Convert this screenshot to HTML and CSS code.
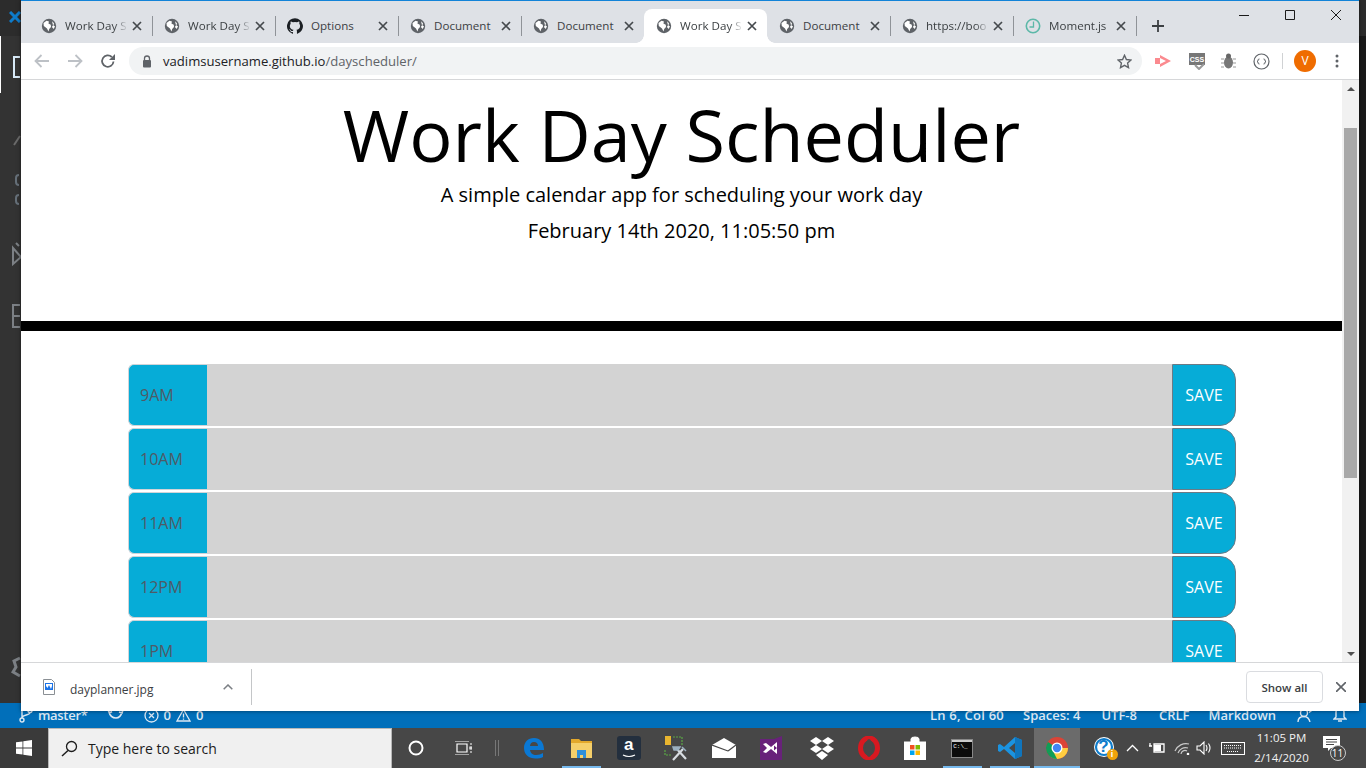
FILE: index.html
```html
<!DOCTYPE html>
<html lang="en">
<head>
<meta charset="utf-8">
<title>Work Day Scheduler</title>
<link rel="stylesheet" href="styles.css">
</head>
<body>
<svg class="defs" width="0" height="0" aria-hidden="true">
  <symbol id="globe" viewBox="0 0 16 16">
    <circle cx="8" cy="8" r="7.200" fill="#5f6368"/>
    <path d="M2.500 5 5.500 2.800l2.500.7-.6 2 2.400 1.300.2 2.200L8.200 11 7.500 13.500 6 10.500 2.800 8z" fill="#fff"/>
    <path d="M11 3.200l2 2-.6 2.300 1.600.7-1.300 2.800-1.800-2L12 7.200z" fill="#fff"/>
  </symbol>
  <symbol id="close" viewBox="0 0 10 10">
    <path d="M1 1l8 8M9 1L1 9" stroke="#45494d" stroke-width="1.700" fill="none"/>
  </symbol>
</svg>

<div class="desktop">
  <div class="vscode">
    <div class="vs-top">
      <svg class="vs-x" width="12" height="12" viewBox="0 0 12 12"><path d="M1 1l10 10M11 1L1 11" stroke="#0e7ccb" stroke-width="3"/></svg>
    </div>
    <div class="vs-middle">
      <div class="activity">
        <div class="activity-mark"></div>
        <svg class="files-icon" width="8" height="22" viewBox="0 0 8 22"><path d="M7 1H1v20h6" fill="none" stroke="#d7e9f7" stroke-width="2"/></svg>
        <svg class="act-icon search-act" width="8" height="12" viewBox="0 0 8 12"><path d="M1 11l6-9" stroke="#6b6b6b" stroke-width="2"/></svg>
        <svg class="act-icon git-act" width="8" height="32" viewBox="0 0 8 32"><path d="M6 2a3 3 0 0 0-3 3v4a3 3 0 0 0 3 3M6 22a3 3 0 0 0-3 3v3a3 3 0 0 0 3 3" fill="none" stroke="#667079" stroke-width="2"/></svg>
        <svg class="act-icon debug-act" width="10" height="24" viewBox="0 0 10 24"><path d="M2 6v16l8-7L2 6zM5 1l3 3" fill="none" stroke="#7c8085" stroke-width="2"/></svg>
        <svg class="act-icon ext-act" width="9" height="24" viewBox="0 0 9 24"><path d="M8 1H1v22h7M1 12h7" fill="none" stroke="#7c8085" stroke-width="2"/></svg>
        <svg class="act-icon gear-act" width="10" height="22" viewBox="0 0 10 22"><path d="M9 2 3 5l2 6-3 5 7 4" fill="none" stroke="#7c8085" stroke-width="3"/></svg>
      </div>
      <div class="vs-editor"></div>
    </div>
    <div class="statusbar">
      <div class="status-group">
        <svg width="14" height="16" viewBox="0 0 14 16"><g fill="none" stroke="#dce8f3" stroke-width="1.400"><circle cx="3" cy="13" r="2"/><circle cx="11" cy="3.400" r="2"/><path d="M3 11V4M11 5.500c0 3-8 2-8 5.500"/></g></svg>
        <span class="master">master*</span>
        <svg class="sync" width="17" height="12" viewBox="0 0 17 12"><path d="M2 3c1 4 4 6 7 6s5-2 6-6M1 1l1.500 3L5 2.500M16 1l-1 3-3-1" fill="none" stroke="#dce8f3" stroke-width="1.600"/></svg>
        <svg class="err" width="15" height="15" viewBox="0 0 15 15"><circle cx="7.500" cy="7.500" r="6.500" fill="none" stroke="#dce8f3" stroke-width="1.300"/><path d="M5 5l5 5M10 5l-5 5" stroke="#dce8f3" stroke-width="1.300"/></svg>
        <span>0</span>
        <svg width="15" height="14" viewBox="0 0 15 14"><path d="M7.500 1.500 14 13H1zM7.500 5.500v4M7.500 10.500v1.300" fill="none" stroke="#dce8f3" stroke-width="1.300"/></svg>
        <span>0</span>
      </div>
      <div class="status-group status-right">
        <span class="st-pos">Ln 6, Col 60</span>
        <span>Spaces: 4</span>
        <span class="st-enc">UTF-8</span>
        <span>CRLF</span>
        <span>Markdown</span>
        <svg class="st-person" width="17" height="14" viewBox="0 0 17 14"><g fill="none" stroke="#dce8f3" stroke-width="1.400"><circle cx="7" cy="5" r="3.500"/><path d="M1 14c0-4 3-5.500 6-5.500s5 1.500 6 5.500M12 2h4M12 4.500l4-3"/></g></svg>
        <svg width="14" height="15" viewBox="0 0 14 15"><path d="M3 9V4q0-2 2-2h4q2 0 2 2v5l2 2H1zM5 13h4" fill="none" stroke="#dce8f3" stroke-width="1.400"/></svg>
      </div>
    </div>
  </div>

  <div class="taskbar">
    <div class="start">
      <svg width="16" height="16" viewBox="0 0 16 16"><path d="M0 2.300 6.500 1.400v6.200H0zM7.300 1.300 16 0v7.600H7.300zM0 8.400h6.500v6.200L0 13.700zM7.300 8.400H16V16l-8.700-1.300z" fill="#fff"/></svg>
    </div>
    <div class="searchbox">
      <svg width="17" height="17" viewBox="0 0 17 17"><circle cx="10.500" cy="6.500" r="5" fill="none" stroke="#1c1c1c" stroke-width="1.300"/><path d="M7 10.500 1 16" stroke="#1c1c1c" stroke-width="1.500"/></svg>
      <span>Type here to search</span>
    </div>
    <div class="tb-slot tb-cortana"><svg width="16" height="16" viewBox="0 0 16 16"><circle cx="8" cy="8" r="6.500" fill="none" stroke="#fff" stroke-width="2"/></svg></div>
    <div class="tb-slot tb-view"><svg width="18" height="14" viewBox="0 0 18 14"><path d="M3 3h10v8H3zM1 0h14M1 14h14M16 3h2M16 11h2M16 6h2v2h-2z" fill="none" stroke="#fff" stroke-width="1.200"/></svg></div>
    <div class="tb-handle"></div>
    <div class="tb-slot tb-edge"><svg width="22" height="22" viewBox="0 0 22 22"><path d="M1 11C1 5 5 1 11 1c6 0 10 4 10 12H7c.3 3 3 5 6 5 3 0 5-.8 7-2v4c-2 1-4.500 1.500-7.500 1.500C6 21.500 1 17.500 1 11zM7 9h8c0-2.500-1.500-4-4-4S7.300 6.500 7 9z" fill="#0a78d4"/></svg></div>
    <div class="tb-slot tb-explorer running"><svg width="23" height="19" viewBox="0 0 23 19"><path d="M1 0h8l2 2h11v3H1z" fill="#e3a82b"/><path d="M1 4h21v15H1z" fill="#f5cf6a"/><path d="M7 11h9v8h-3v-3h-3v3H7z" fill="#2f8fd8"/></svg></div>
    <div class="tb-slot tb-amazon"><div class="amazon"><span>a</span><svg width="14" height="4" viewBox="0 0 14 4"><path d="M1 1q6 3 12 0" fill="none" stroke="#fff" stroke-width="1.200"/></svg></div></div>
    <div class="tb-slot tb-tools"><svg width="24" height="25" viewBox="0 0 24 25"><path d="M1 0h6v9H1z" fill="#e9b52f"/><path d="M9 1h9v8M1 14v5h6" fill="none" stroke="#5aa845" stroke-width="1.200" stroke-dasharray="2 1"/><path d="M9 24 19 13M12 12l10 11" stroke="#d8dde2" stroke-width="2.200"/><path d="M9 11h7l-2 3h-4zM18 11l4 4" stroke="#9cb0c0" stroke-width="1.500" fill="#9cb0c0"/></svg></div>
    <div class="tb-slot tb-mail"><svg width="24" height="20" viewBox="0 0 24 20"><path d="M12 0l12 7v13H0V7z" fill="#fff"/><path d="M0 7l16 6M24 7l-8 6" stroke="#474747" stroke-width="1.200" fill="none"/></svg></div>
    <div class="tb-slot tb-vs"><svg width="22" height="24" viewBox="0 0 22 24"><path d="M0 3h14l8-3v24H0z" fill="#68217a"/><path d="M3 8l3-1 5 4 6-5v12l-6-5-5 4-3-1 4-4zM14 9.500v5l3-2.500z" fill="#fff"/></svg></div>
    <div class="tb-slot tb-dropbox"><svg width="24" height="23" viewBox="0 0 24 23"><path d="M6 0l6 4-6 4-6-4zM18 0l6 4-6 4-6-4zM6 8l6 4-6 4-6-4zM18 8l6 4-6 4-6-4zM12 14l6 4-6 5-6-5z" fill="#fff"/></svg></div>
    <div class="tb-slot tb-opera"><svg width="22" height="24" viewBox="0 0 22 24"><ellipse cx="11" cy="12" rx="8.500" ry="10" fill="none" stroke="#d81920" stroke-width="5"/><ellipse cx="11" cy="12" rx="3.500" ry="9" fill="#474747"/></svg></div>
    <div class="tb-slot tb-store"><svg width="22" height="24" viewBox="0 0 22 24"><path d="M0 6h22v18H0zM7 6V3q0-2 4-2t4 2v3" fill="#fff" stroke="#fff"/><path d="M6 9h4.500v4.500H6z" fill="#f25022"/><path d="M11.500 9H16v4.500h-4.500z" fill="#7fba00"/><path d="M6 14.500h4.500V19H6z" fill="#00a4ef"/><path d="M11.500 14.500H16V19h-4.500z" fill="#ffb900"/></svg></div>
    <div class="tb-slot tb-cmd running"><div class="cmd"><span class="cmd-top"></span><span class="cmd-prompt">C:\_</span></div></div>
    <div class="tb-slot tb-code running"><svg width="24" height="24" viewBox="0 0 24 24"><path d="M17 1l7 3v16l-7 3L6 13l-4 3-2-1V9l2-1 4 3zM17 7l-6 5 6 5z" fill="#1b93e0"/><path d="M17 1l7 3v16l-7 3z" fill="#0f75bd"/></svg></div>
    <div class="tb-slot tb-chrome running active"><svg width="24" height="24" viewBox="0 0 24 24"><circle cx="12" cy="12" r="11" fill="#db4437"/><path d="M12 12 2.500 17.500A11 11 0 0 1 3 6z" fill="#0f9d58"/><path d="M12 12h11a11 11 0 0 1-16.500 9.500z" fill="#ffcd40"/><path d="M12 23a11 11 0 0 1-9.500-5.500L7.500 14z" fill="#0f9d58"/><circle cx="12" cy="12" r="5.500" fill="#fff"/><circle cx="12" cy="12" r="4.200" fill="#4285f4"/></svg></div>
    <div class="tray">
      <div class="help-wrap">
        <svg width="24" height="24" viewBox="0 0 24 24"><circle cx="11" cy="11" r="10" fill="#fff"/><circle cx="11" cy="11" r="8" fill="#fff" stroke="#0e7ccb" stroke-width="2.200"/></svg>
        <span class="help-q">?</span>
        <span class="help-i">i</span>
      </div>
      <svg class="tray-chev" width="13" height="8" viewBox="0 0 13 8"><path d="M1 7l5.500-5.500L12 7" fill="none" stroke="#fff" stroke-width="1.300"/></svg>
      <svg class="tray-batt" width="16" height="12" viewBox="0 0 16 12"><path d="M0 4h3M1 1v3M5 2h10v8H5z" fill="none" stroke="#fff" stroke-width="1.300"/><path d="M5 3h7v6H5z" fill="#fff"/></svg>
      <svg class="tray-wifi" width="17" height="14" viewBox="0 0 17 14"><g fill="none" stroke="#c9c9c9" stroke-width="1.200"><path d="M1 10A12 12 0 0 1 15 3M4 12A8 8 0 0 1 14 7M7 13A4 4 0 0 1 13 10"/></g><circle cx="14" cy="13" r="1.300" fill="#fff"/></svg>
      <svg class="tray-vol" width="16" height="14" viewBox="0 0 16 14"><path d="M1 5h3l4-4v12L4 9H1zM10 4q2 3 0 6M12.500 2.500q3 4.500 0 9" fill="none" stroke="#fff" stroke-width="1.100"/></svg>
      <svg class="tray-kbd" width="24" height="13" viewBox="0 0 24 13"><rect x=".5" y=".5" width="23" height="12" fill="none" stroke="#fff"/><path d="M3 3.500h18M3 6h18M6 9.500h12" stroke="#fff" stroke-dasharray="1 1" fill="none"/></svg>
      <div class="clock"><span>11:05 PM</span><span>2/14/2020</span></div>
      <div class="notif">
        <svg width="18" height="16" viewBox="0 0 18 16"><path d="M0 0h17v12H8l-3 3v-3H0z" fill="#fff"/><path d="M3 3.500h11M3 6h11M3 8.500h8" stroke="#474747" fill="none"/></svg>
        <span class="notif-count">11</span>
      </div>
    </div>
  </div>

  <div class="browser">
    <div class="tabstrip">
      <div class="tab"><svg class="fav" width="16" height="16"><use href="#globe"/></svg><span class="tab-title fade">Work Day S</span><svg class="tab-x" width="10" height="10"><use href="#close"/></svg></div>
      <div class="tab"><svg class="fav" width="16" height="16"><use href="#globe"/></svg><span class="tab-title fade">Work Day S</span><svg class="tab-x" width="10" height="10"><use href="#close"/></svg></div>
      <div class="tab"><svg class="fav" width="16" height="16" viewBox="0 0 24 24"><path fill="#1b1f23" d="M12 .3a12 12 0 0 0-3.800 23.400c.6.100.8-.3.800-.6v-2c-3.300.7-4-1.600-4-1.600-.6-1.400-1.400-1.800-1.400-1.800-1-.7.100-.7.100-.7 1.200.1 1.800 1.200 1.800 1.200 1 1.800 2.800 1.300 3.500 1 .1-.8.400-1.300.8-1.600-2.700-.3-5.500-1.300-5.500-6 0-1.200.5-2.300 1.300-3.100-.2-.4-.6-1.600 0-3.200 0 0 1-.3 3.400 1.200a11.500 11.500 0 0 1 6 0c2.300-1.500 3.300-1.200 3.300-1.200.6 1.600.2 2.800.1 3.200.8.800 1.200 1.900 1.200 3.100 0 4.600-2.800 5.700-5.500 6 .4.400.8 1.100.8 2.200v3.300c0 .3.200.7.800.6A12 12 0 0 0 12 .3z"/></svg><span class="tab-title">Options</span><svg class="tab-x" width="10" height="10"><use href="#close"/></svg></div>
      <div class="tab"><svg class="fav" width="16" height="16"><use href="#globe"/></svg><span class="tab-title">Document</span><svg class="tab-x" width="10" height="10"><use href="#close"/></svg></div>
      <div class="tab no-sep"><svg class="fav" width="16" height="16"><use href="#globe"/></svg><span class="tab-title">Document</span><svg class="tab-x" width="10" height="10"><use href="#close"/></svg></div>
      <div class="tab active no-sep"><svg class="fav" width="16" height="16"><use href="#globe"/></svg><span class="tab-title fade">Work Day S</span><svg class="tab-x" width="10" height="10"><use href="#close"/></svg></div>
      <div class="tab"><svg class="fav" width="16" height="16"><use href="#globe"/></svg><span class="tab-title">Document</span><svg class="tab-x" width="10" height="10"><use href="#close"/></svg></div>
      <div class="tab"><svg class="fav" width="16" height="16"><use href="#globe"/></svg><span class="tab-title fade">https://boo</span><svg class="tab-x" width="10" height="10"><use href="#close"/></svg></div>
      <div class="tab"><svg class="fav" width="16" height="16" viewBox="0 0 16 16"><circle cx="8" cy="8" r="6.700" fill="none" stroke="#5cb8a8" stroke-width="1.600"/><path d="M8.500 3.500V9H4.500" fill="none" stroke="#5cb8a8" stroke-width="1.300"/></svg><span class="tab-title fade-end">Moment.js</span><svg class="tab-x" width="10" height="10"><use href="#close"/></svg></div>
      <svg class="newtab" width="12" height="12" viewBox="0 0 12 12"><path d="M6 0v12M0 6h12" stroke="#3c4043" stroke-width="1.800"/></svg>
      <div class="winctl">
        <svg width="10" height="10" viewBox="0 0 10 10"><path d="M0 5.500h10" stroke="#1a1a1a"/></svg>
        <svg width="10" height="10" viewBox="0 0 10 10"><path d="M.5.500h9v9h-9z" fill="none" stroke="#1a1a1a"/></svg>
        <svg width="10" height="10" viewBox="0 0 10 10"><path d="M0 0l10 10M10 0L0 10" stroke="#1a1a1a" stroke-width="1"/></svg>
      </div>
    </div>
    <div class="toolbar">
      <svg class="nav-icon" width="16" height="14" viewBox="0 0 16 14"><path d="M15 7H2M7.500 1 1.500 7l6 6" fill="none" stroke="#bdc1c6" stroke-width="1.800"/></svg>
      <svg class="nav-icon" width="16" height="14" viewBox="0 0 16 14"><path d="M1 7h13M8.500 1l6 6-6 6" fill="none" stroke="#bdc1c6" stroke-width="1.800"/></svg>
      <svg class="nav-icon" width="16" height="16" viewBox="0 0 16 16"><path d="M13.500 8.500a5.700 5.700 0 1 1-1.700-4.500" fill="none" stroke="#5f6368" stroke-width="1.800"/><path d="M15 1v6H9z" fill="#5f6368"/></svg>
      <div class="omnibox">
        <svg width="10" height="13" viewBox="0 0 10 13"><path d="M2.500 5V3.500a2.500 2.500 0 0 1 5 0V5" fill="none" stroke="#5f6368" stroke-width="1.300"/><rect x="1" y="5" width="8" height="7.500" rx="1" fill="#5f6368"/></svg>
        <span class="url"><span class="url-host">vadimsusername.github.io</span>/dayscheduler/</span>
        <svg class="star" width="15" height="15" viewBox="0 0 15 15"><path d="M7.500 1.300 9.400 5.500l4.600.5-3.400 3.100.9 4.500-4-2.300-4 2.300.9-4.500L1 6l4.600-.5z" fill="none" stroke="#5f6368" stroke-width="1.400"/></svg>
      </div>
      <div class="extensions">
        <svg width="17" height="12" viewBox="0 0 17 12"><path d="M0 3h5V0l11 6-11 6V9H0z" fill="#fb8a8f"/><path d="M5 3l6 3-6 3z" fill="#fff"/></svg>
        <svg width="17" height="17" viewBox="0 0 17 17"><path d="M0 0h16v12H0z" fill="#777"/><text x="8" y="9" text-anchor="middle" class="css-badge">CSS</text><path d="M6 12l4 4 5-5" fill="none" stroke="#999" stroke-width="2"/></svg>
        <svg class="ext-bug" width="15" height="16" viewBox="0 0 15 16"><ellipse cx="7.500" cy="9.500" rx="4.500" ry="6" fill="#777"/><circle cx="7.500" cy="3" r="2.500" fill="#666"/><path d="M0 6h3M12 6h3M0 10h3M12 10h3M0 14h3M12 14h3" stroke="#999"/></svg>
        <svg width="17" height="17" viewBox="0 0 17 17"><circle cx="8.500" cy="8.500" r="7.500" fill="none" stroke="#5f6368" stroke-width="1.200"/><path d="M6.500 6q-1.500 0-1.500 1v1l-1 .5 1 .5v1q0 1 1.500 1M10.500 6q1.500 0 1.500 1v1l1 .5-1 .5v1q0 1-1.500 1" fill="none" stroke="#5f6368"/></svg>
      </div>
      <div class="tool-sep"></div>
      <div class="avatar">V</div>
      <svg class="menu-dots" width="4" height="14" viewBox="0 0 4 14"><circle cx="2" cy="2" r="1.500" fill="#5f6368"/><circle cx="2" cy="7" r="1.500" fill="#5f6368"/><circle cx="2" cy="12" r="1.500" fill="#5f6368"/></svg>
    </div>
    <div class="viewport">
      <div class="page">
        <header class="jumbotron">
          <h1>Work Day Scheduler</h1>
          <p class="lead">A simple calendar app for scheduling your work day</p>
          <p class="lead today">February 14th 2020, 11:05:50 pm</p>
        </header>
        <main class="schedule">
          <div class="row"><div class="hour">9AM</div><div class="entry"></div><div class="save">SAVE</div></div>
          <div class="row"><div class="hour">10AM</div><div class="entry"></div><div class="save">SAVE</div></div>
          <div class="row"><div class="hour">11AM</div><div class="entry"></div><div class="save">SAVE</div></div>
          <div class="row"><div class="hour">12PM</div><div class="entry"></div><div class="save">SAVE</div></div>
          <div class="row"><div class="hour">1PM</div><div class="entry"></div><div class="save">SAVE</div></div>
        </main>
      </div>
      <div class="scrollbar">
        <div class="sb-btn"><span class="sb-up"></span></div>
        <div class="sb-track"><div class="sb-thumb"></div></div>
        <div class="sb-btn"><span class="sb-down"></span></div>
      </div>
    </div>
    <div class="shelf">
      <div class="download">
        <svg width="12" height="16" viewBox="0 0 12 16"><path d="M.5.500h8l3 3v12H.5z" fill="#fff" stroke="#8a8f94"/><path d="M2 4h8v7H2z" fill="#1a73e8"/><path d="M3 7l1.500 2L6 6l2 4 1-3v-2H3z" fill="#fff"/></svg>
        <span class="dl-name">dayplanner.jpg</span>
        <svg class="dl-chev" width="10" height="6" viewBox="0 0 10 6"><path d="M.7 5.300 5 1l4.300 4.300" fill="none" stroke="#7b7f84" stroke-width="1.500"/></svg>
      </div>
      <div class="shelf-right">
        <div class="showall">Show all</div>
        <svg width="10" height="10" viewBox="0 0 10 10"><path d="M0 0l10 10M10 0L0 10" stroke="#5f6368" stroke-width="1.600"/></svg>
      </div>
    </div>
  </div>
</div>
</body>
</html>
```

FILE: styles.css
```css
* { box-sizing: border-box; }
html, body { margin: 0; height: 100%; overflow: hidden; }
body { font-family: "Open Sans", "Liberation Sans", sans-serif; background: #474747; }
.defs { display: block; height: 0; }
svg { display: block; flex: none; }

.desktop { position: relative; width: 1366px; height: 768px; display: flex; flex-direction: column; overflow: hidden; }

/* VS Code behind the browser */
.vscode { height: 728px; display: flex; flex-direction: column; background: #1a1a1a; }
.vs-top { height: 36px; background: #2c2c2c; padding: 11px 0 0 9px; }
.vs-middle { flex: 1; display: flex; min-height: 0; }
.activity { width: 21px; background: #333; position: relative; display: flex; flex-direction: column; align-items: flex-end; }
.activity-mark { position: absolute; left: 0; top: 0; width: 1px; height: 57px; background: #fff; }
.files-icon { margin-top: 20px; }
.act-icon { position: absolute; right: 0; }
.search-act { top: 98px; }
.git-act { top: 137px; }
.debug-act { top: 206px; }
.ext-act { top: 268px; }
.gear-act { top: 620px; }
.vs-editor { flex: 1; }
.statusbar { height: 25px; background: #016fba; color: #dce8f3; font-size: 13px; font-weight: 600; display: flex; justify-content: space-between; align-items: flex-end; padding: 0 19px 4px 19px; }
.status-group { display: flex; align-items: center; gap: 5px; height: 18px; }
.master { letter-spacing: -.3px; }
.sync { margin: 0 15px 0 14px; }
.status-right { gap: 19px; }
.st-pos { letter-spacing: .25px; }
.st-enc { margin: 0 3px 0 2px; }
.st-person { margin-left: 2px; }

/* Taskbar */
.taskbar { height: 40px; background: #474747; display: flex; align-items: center; }
.start { width: 48px; height: 40px; display: flex; align-items: center; justify-content: center; background: #3a3a3a; }
.searchbox { width: 344px; height: 40px; background: #f0f0f0; border: 1px solid #b8b8b8; border-bottom: 0; display: flex; align-items: center; gap: 10px; padding-left: 12px; font-size: 14px; color: #1c1c1c; }
.tb-slot { height: 40px; display: flex; align-items: center; justify-content: center; position: relative; width: 47.500px; }
.tb-cortana { width: 48px; }
.tb-view { width: 46px; }
.tb-handle { width: 4px; height: 16px; border-left: 1px solid #777; border-right: 1px solid #777; margin: 0 11px 0 9px; }
.tb-dropbox { margin-left: 3px; }
.tb-store { margin-left: -2px; }
.tb-slot.running::after { content: ""; position: absolute; left: 4px; right: 4px; bottom: 0; height: 2px; background: #76b9ed; }
.tb-slot.active { background: #6b6b6b; width: 46px; }
.tb-slot.active::after { left: 0; right: 0; }
.amazon { width: 24px; height: 24px; border-radius: 3px; background: #232f3e; color: #fff; display: flex; flex-direction: column; align-items: center; font: bold 17px/18px "Liberation Sans", sans-serif; }
.cmd { width: 22px; height: 19px; background: #0c0c0c; border: 1px solid #888; display: flex; flex-direction: column; }
.cmd-top { height: 2px; background: #ccc; }
.cmd-prompt { font: 6px/9px "Liberation Mono", monospace; color: #fff; padding-left: 1px; }
.tray { display: flex; align-items: center; flex: 1; padding-left: 13px; height: 40px; }
.help-wrap { position: relative; width: 24px; height: 24px; }
.help-q { position: absolute; left: 0; top: 1px; width: 22px; text-align: center; font: bold 17px/20px "Liberation Sans", sans-serif; color: #0e7ccb; }
.help-i { position: absolute; right: -1px; bottom: 0; width: 11px; height: 11px; border-radius: 50%; background: #f0a30a; color: #fff; font: bold 9px/11px "Liberation Sans", sans-serif; text-align: center; }
.tray-chev { margin-left: 9px; }
.tray-batt { margin-left: 10px; }
.tray-wifi { margin-left: 9px; }
.tray-vol { margin-left: 5px; }
.tray-kbd { margin-left: 9px; }
.clock { width: 60px; margin-left: 7px; color: #f2f2f2; font-size: 11.500px; line-height: 20px; display: flex; flex-direction: column; align-items: center; white-space: nowrap; }
.notif { position: relative; width: 24px; height: 30px; margin-left: 11px; padding-top: 3px; }
.notif-count { position: absolute; left: 7px; top: 12px; width: 16px; height: 16px; border-radius: 50%; border: 1px solid #ccc; background: #474747; color: #fff; font-size: 10px; line-height: 14px; text-align: center; }

/* Browser window */
.browser { position: absolute; left: 21px; top: 0; width: 1338px; height: 711px; display: flex; flex-direction: column; background: #fff; border-top: 1px solid #1283d8; box-shadow: 0 0 4px rgba(0,0,0,.5); }
.tabstrip { height: 42px; background: #dee1e6; display: flex; align-items: flex-end; padding-left: 8px; position: relative; }
.tab { width: 123px; height: 34px; display: flex; align-items: center; padding: 0 10px 0 12px; position: relative; font-size: 11.600px; color: #3c4043; }
.tab::after { content: ""; position: absolute; right: -1px; top: 7px; width: 1px; height: 20px; background: #8f9398; }
.tab.no-sep::after { display: none; }
.tab.active { background: #fff; border-radius: 8px 8px 0 0; }
.tab.active::before, .tab.active::after { content: ""; display: block; position: absolute; bottom: 0; top: auto; width: 8px; height: 8px; background: radial-gradient(circle at 0 0, transparent 7.500px, #fff 8px); }
.tab.active::before { left: -8px; }
.tab.active::after { right: -8px; background: radial-gradient(circle at 100% 0, transparent 7.500px, #fff 8px); }
.fav { margin-right: 8px; }
.tab-title { flex: 1; min-width: 0; white-space: nowrap; margin-top: -2px; }
.fade { -webkit-mask-image: linear-gradient(90deg, #000 78%, transparent 100%); mask-image: linear-gradient(90deg, #000 78%, transparent 100%); }
.fade-end { -webkit-mask-image: linear-gradient(90deg, #000 88%, rgba(0,0,0,.3) 100%); mask-image: linear-gradient(90deg, #000 88%, rgba(0,0,0,.3) 100%); }
.tab-x { margin-left: 4px; }
.newtab { margin: 0 0 11px 16px; }
.winctl { position: absolute; right: 18px; top: 9px; display: flex; gap: 36px; }

.toolbar { height: 37px; background: #fff; border-bottom: 1px solid #d6d7d9; display: flex; align-items: center; padding-left: 13px; }
.nav-icon { margin-right: 17px; }
.omnibox { width: 1013px; height: 28px; margin-left: -4px; background: #f1f3f4; border-radius: 14px; display: flex; align-items: center; padding: 0 10px 0 13px; }
.url { flex: 1; margin-left: 11px; font-size: 13.100px; color: #5f6368; white-space: nowrap; }
.url-host { color: #202124; }
.extensions { display: flex; align-items: center; gap: 17px; margin-left: 13px; }
.css-badge { font: bold 7px "Liberation Sans", sans-serif; fill: #fff; }
.ext-bug { margin-left: -2px; }
.tool-sep { width: 1px; height: 16px; background: #d0d2d4; margin-left: 12px; }
.avatar { width: 22px; height: 22px; margin-left: 11px; border-radius: 50%; background: #ef6c00; color: #fff; font-size: 12px; line-height: 22px; text-align: center; }
.menu-dots { margin-left: 19px; }

.viewport { flex: 1; display: flex; min-height: 0; }
.page { flex: 1; min-width: 0; overflow: hidden; background: #fff; color: #000; }
.jumbotron { height: 251px; border-bottom: 10px solid #000; text-align: center; padding-top: 11px; }
h1 { margin: 0; font-size: 72px; font-weight: 400; line-height: 86px; }
.lead { margin: 0; font-size: 20px; line-height: 30px; padding-top: 3px; }
.today { padding-top: 6px; }
.schedule { padding: 33px 106px 0 107px; display: flex; flex-direction: column; gap: 2px; }
.row { display: flex; height: 62px; flex: none; font-size: 16px; }
.hour { width: 79px; background: #06acd7; color: #4f5a66; border-radius: 6px 0 0 6px; border: 1px solid #d0d4d8; border-right: 0; display: flex; align-items: center; padding-left: 11px; }
.entry { flex: 1; background: #d3d3d3; }
.save { width: 64px; background: #06acd7; color: #fff; border: 1px solid #6b7a85; border-radius: 0 16px 16px 0; display: flex; align-items: center; justify-content: center; }

.scrollbar { width: 17px; background: #f1f1f1; display: flex; flex-direction: column; }
.sb-btn { height: 17px; display: flex; align-items: center; justify-content: center; }
.sb-up { border: 4px solid transparent; border-top: 0; border-bottom: 4px solid #505050; }
.sb-down { border: 4px solid transparent; border-bottom: 0; border-top: 4px solid #505050; }
.sb-track { flex: 1; padding: 31px 2px 0 2px; }
.sb-thumb { height: 350px; background: #a8a8a8; }

.shelf { height: 49px; background: #fff; border-top: 1px solid #d6d7d9; display: flex; justify-content: space-between; align-items: center; }
.download { width: 231px; height: 36px; border-right: 1px solid #c4c6c8; display: flex; align-items: center; padding: 0 18px 0 22px; font-size: 12px; color: #3c4043; }
.dl-name { flex: 1; margin-left: 15px; padding-top: 4px; }
.shelf-right { display: flex; align-items: center; gap: 13px; padding-right: 13px; }
.showall { width: 77px; height: 32px; border: 1px solid #dadce0; border-radius: 4px; font-size: 11.500px; font-weight: 600; color: #3c4043; display: flex; align-items: center; justify-content: center; }
```
